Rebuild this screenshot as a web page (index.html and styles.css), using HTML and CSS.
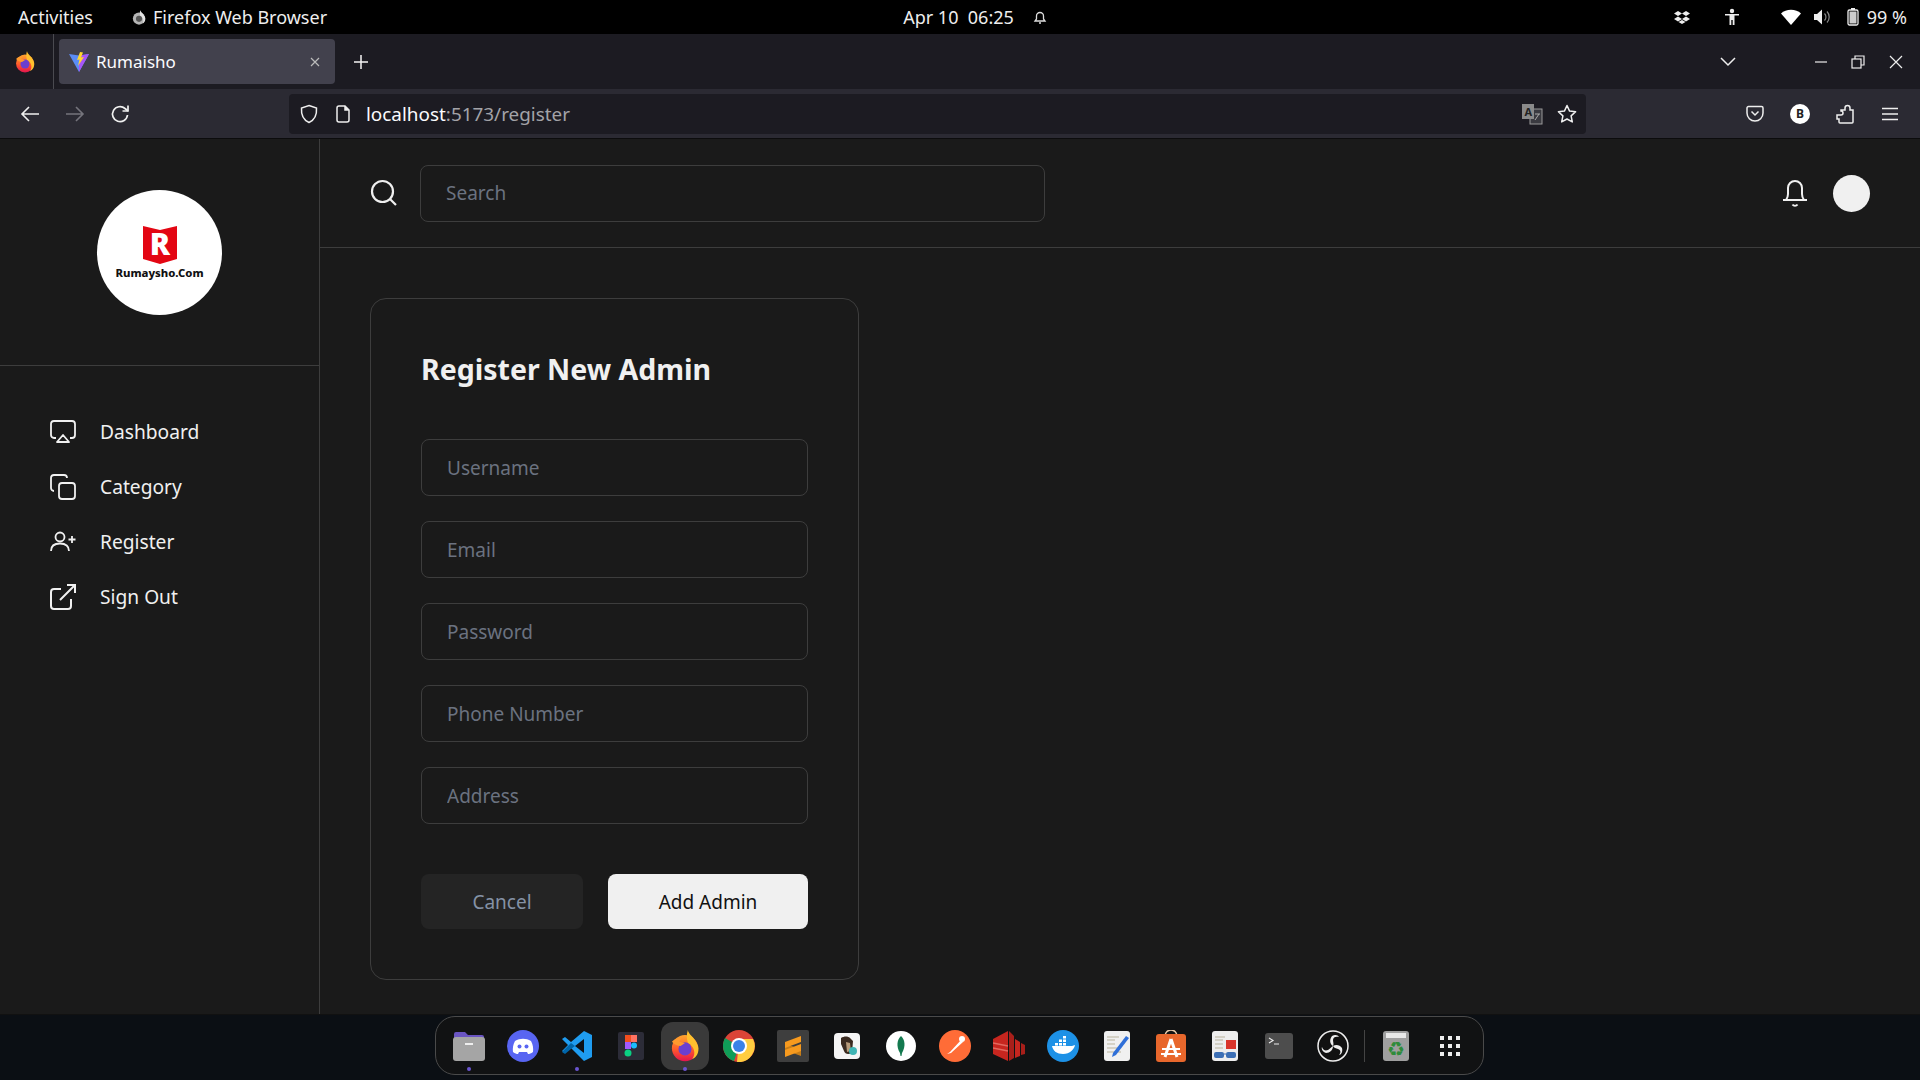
FILE: index.html
```html
<!DOCTYPE html>
<html lang="en">
  <head>
    <meta charset="UTF-8" />
    <meta name="viewport" content="width=device-width, initial-scale=1.0" />
    <title>Rumaisho</title>
    <link rel="stylesheet" href="styles.css">
  </head>
  <body>
    <!-- GNOME top bar -->
    <div class="top-bar">
      <div class="top-left">
        <span>Activities</span>
        <span class="app-name">
          <svg width="14" height="15" viewBox="0 0 20 22"><circle cx="10" cy="12.500" r="9" fill="#b5b5b5"/><path d="M12 0c0 3 5 5 7 11 1 4-1 8-4 9 3-4 1-9-3-11-1-3-1-6 0-9z" fill="#e4e4e4"/><circle cx="10" cy="13" r="4.500" fill="#555"/></svg>
          Firefox Web Browser
        </span>
      </div>
      <div class="top-clock">
        <span>Apr 10&nbsp; 06:25</span>
        <svg width="16" height="16" viewBox="0 0 16 16" fill="none" stroke="#ddd" stroke-width="1.300"><path d="M3 12h10l-1.500-2V7a3.500 3.500 0 0 0-7 0v3z"/><path d="M7 14h2"/></svg>
      </div>
      <div class="top-right">
        <svg class="tray-dropbox" width="16" height="14" viewBox="0 0 16 14" fill="#eee"><path d="M4 1l4 2.500L4 6 0 3.500zM12 1l4 2.500L12 6 8 3.500zM4 6.500l4 2.500-4 2.500-4-2.500zM12 6.500l4 2.500-4 2.500-4-2.500zM4.500 12l3.500-2 3.500 2L8 14z"/></svg>
        <svg class="tray-access" width="18" height="18" viewBox="0 0 18 18" fill="#eee"><circle cx="9" cy="3" r="2.200"/><path d="M2 6h14v1.600h-4.500V17H9.700v-5H8.300v5H6.500V7.600H2z"/></svg>
        <svg class="tray-wifi" width="20" height="16" viewBox="0 0 20 16" fill="#fff"><path d="M0 4.500C5-.5 15-.5 20 4.500L10 16z"/></svg>
        <svg class="tray-volume" width="18" height="16" viewBox="0 0 18 16"><path d="M0 5h3l5-4.500v15L3 11H0z" fill="#eee"/><path d="M10.500 4.500a5 5 0 0 1 0 7M13 2.500a8 8 0 0 1 0 11" fill="none" stroke="#888" stroke-width="1.200"/></svg>
        <svg class="tray-battery" width="12" height="18" viewBox="0 0 12 18"><rect x="1" y="2" width="10" height="15" rx="1.500" fill="none" stroke="#eee" stroke-width="1.300"/><rect x="4" y="0" width="4" height="2" fill="#eee"/><rect x="2.500" y="3.500" width="7" height="12" fill="#ccc"/></svg>
        <span class="tray-percent">99 %</span>
      </div>
    </div>

    <!-- Firefox tab strip -->
    <div class="tab-strip">
      <div class="ff-button">
        <svg width="20" height="22" viewBox="0 0 20 22"><defs><linearGradient id="ffTop" x1="0" y1="0" x2="0" y2="1"><stop offset="0" stop-color="#ffa52e"/><stop offset="0.55" stop-color="#ff5a2b"/><stop offset="1" stop-color="#e3134f"/></linearGradient></defs><circle cx="10" cy="12.500" r="9" fill="url(#ffTop)"/><path d="M12 0c0 3 5 5 7 11 1 4-1 8-4 9 3-4 1-9-3-11-1-3-1-6 0-9z" fill="#ffc02e"/><circle cx="10" cy="13" r="4.500" fill="#6b3fd0"/><path d="M1 8c2-2 4-3 7-3L6 8l4 1-3 2c-2 0-4-1-6-3z" fill="#ff9a2e"/></svg>
      </div>
      <div class="tab">
        <svg width="20" height="20" viewBox="0 0 20 20"><path d="M0 2l10 1.500L20 2 10 20z" fill="#5b8cf5"/><path d="M10 3.500L20 2 10 20z" fill="#a855f7"/><path d="M11 0l3 .5-2 5 3-.5-6 9 1.500-6.500-2.500.5z" fill="#ffd62e"/></svg>
        <span class="tab-title">Rumaisho</span>
        <svg class="tab-close" width="12" height="12" viewBox="0 0 12 12" stroke="#bbb" stroke-width="1.200"><path d="M2 2l8 8M10 2l-8 8"/></svg>
      </div>
      <svg class="new-tab" width="16" height="16" viewBox="0 0 16 16" stroke="#f5f5f5" stroke-width="1.500"><path d="M8 1v14M1 8h14"/></svg>
      <svg class="tab-list" width="16" height="10" viewBox="0 0 16 10" fill="none" stroke="#eee" stroke-width="1.500"><path d="M1 1l7 7 7-7"/></svg>
      <svg class="win-min" width="14" height="14" viewBox="0 0 14 14" stroke="#eee" stroke-width="1.200"><path d="M1 7h12"/></svg>
      <svg class="win-max" width="14" height="14" viewBox="0 0 14 14" fill="none" stroke="#eee" stroke-width="1.200"><rect x="1" y="4" width="9" height="9"/><path d="M4 4V1h9v9h-3"/></svg>
      <svg class="win-close" width="14" height="14" viewBox="0 0 14 14" stroke="#eee" stroke-width="1.200"><path d="M1 1l12 12M13 1L1 13"/></svg>
    </div>

    <!-- Firefox toolbar -->
    <div class="toolbar">
      <svg class="tb-back" width="20" height="18" viewBox="0 0 20 18" fill="none" stroke="#f0f0f0" stroke-width="1.600"><path d="M19 9H2M9 2L2 9l7 7"/></svg>
      <svg class="tb-forward" width="20" height="18" viewBox="0 0 20 18" fill="none" stroke="#75747c" stroke-width="1.600"><path d="M1 9h17M11 2l7 7-7 7"/></svg>
      <svg class="tb-reload" width="20" height="20" viewBox="0 0 20 20" fill="none" stroke="#f0f0f0" stroke-width="1.700"><path d="M17.500 11a7.500 7.500 0 1 1-2.500-6.500L18 7"/><path d="M18 1.500V7h-5.500"/></svg>
      <div class="url-bar">
        <svg width="20" height="20" viewBox="0 0 20 20" fill="none" stroke="#eee" stroke-width="1.500"><path d="M10 1.500l7.500 2.500c.5 7-2 12-7.500 14.500C4.500 16 2 11 2.500 4z"/></svg>
        <svg class="url-page" width="16" height="18" viewBox="0 0 16 18" fill="none" stroke="#eee" stroke-width="1.500"><path d="M2 3a2 2 0 0 1 2-2h6l4 4v10a2 2 0 0 1-2 2H4a2 2 0 0 1-2-2z"/><path d="M10 1v4h4" fill="#eee"/></svg>
        <span class="url-text">localhost<span class="url-dim">:5173/register</span></span>
        <svg class="url-translate" width="22" height="22" viewBox="0 0 22 22"><rect x="9" y="6" width="12" height="15" fill="#3a3a40" stroke="#999"/><rect x="1" y="1" width="12" height="15" fill="#8a8a8a"/><text x="3.500" y="12.500" class="translate-letter">A</text><path d="M14 11h5M18 11l-4 6" stroke="#aaa" fill="none"/></svg>
        <svg class="url-star" width="20" height="20" viewBox="0 0 20 20" fill="none" stroke="#f0f0f0" stroke-width="1.500" stroke-linejoin="round"><path d="M10 1.500l2.600 5.600 6 .7-4.500 4.100 1.200 6L10 15l-5.300 2.900 1.200-6L1.400 7.800l6-.7z"/></svg>
      </div>
      <svg class="tb-pocket" width="18" height="18" viewBox="0 0 18 18" fill="none" stroke="#eee" stroke-width="1.500"><path d="M1 3a1.500 1.500 0 0 1 1.500-1.500h13A1.500 1.500 0 0 1 17 3v5a8 8 0 0 1-16 0z"/><path d="M5.500 6.500L9 10l3.500-3.500"/></svg>
      <div class="tb-avatar">B</div>
      <svg class="tb-ext" width="18" height="20" viewBox="0 0 18 20" fill="none" stroke="#eee" stroke-width="1.500"><path d="M1 11h4a2 2 0 0 0 0-4V6h4V4a2.500 2.500 0 0 1 5 0v2h3v12a1 1 0 0 1-1 1H4a1 1 0 0 1-1-1v-3H1z"/></svg>
      <svg class="tb-menu" width="16" height="14" viewBox="0 0 16 14" stroke="#eee" stroke-width="1.500"><path d="M0 1.500h16M0 7h16M0 12.500h16"/></svg>
    </div>

    <!-- The page itself -->
    <div class="app">
      <aside class="sidebar">
        <div class="logo-box">
          <div class="logo">
            <svg class="logo-mark" width="36" height="38" viewBox="0 0 36 38"><path d="M1 0l17 4 17-4v33l-17 5-17-5z" fill="#e30613"/><text x="18" y="29" class="logo-r">R</text></svg>
            <span class="logo-name">Rumaysho.Com</span>
          </div>
        </div>
        <nav class="side-nav">
          <a class="nav-item">
            <svg width="26" height="24" viewBox="0 0 26 24" fill="none" stroke="#f0f0f0" stroke-width="1.800" stroke-linejoin="round"><path d="M6 18H4a3 3 0 0 1-3-3V4a3 3 0 0 1 3-3h18a3 3 0 0 1 3 3v11a3 3 0 0 1-3 3h-2"/><path d="M13 15l6 7H7z"/></svg>
            Dashboard
          </a>
          <a class="nav-item">
            <svg width="26" height="26" viewBox="0 0 26 26" fill="none" stroke="#f0f0f0" stroke-width="1.800"><rect x="9" y="9" width="16" height="16" rx="3"/><path d="M4 17a3 3 0 0 1-3-3V4a3 3 0 0 1 3-3h10a3 3 0 0 1 3 3"/></svg>
            Category
          </a>
          <a class="nav-item">
            <svg width="26" height="22" viewBox="0 0 26 22" fill="none" stroke="#f0f0f0" stroke-width="1.800"><circle cx="10" cy="6" r="4.500"/><path d="M1 20c0-5 3-7.500 9-7.500s9 2.500 9 7.500M22 5v7M18.500 8.500h7"/></svg>
            Register
          </a>
          <a class="nav-item">
            <svg width="26" height="26" viewBox="0 0 26 26" fill="none" stroke="#f0f0f0" stroke-width="2"><path d="M21 15v7a3 3 0 0 1-3 3H4a3 3 0 0 1-3-3V8a3 3 0 0 1 3-3h7"/><path d="M17 1h8v8M25 1L10 16"/></svg>
            Sign Out
          </a>
        </nav>
      </aside>

      <div class="content">
        <header class="page-header">
          <svg width="28" height="28" viewBox="0 0 28 28" fill="none" stroke="#f0f0f0" stroke-width="2.200"><circle cx="12.500" cy="12.500" r="10.500"/><path d="M20 20l6 6"/></svg>
          <input class="search" type="text" placeholder="Search" />
          <svg class="bell" width="26" height="28" viewBox="0 0 26 28" fill="none" stroke="#f0f0f0" stroke-width="2"><path d="M1 21h24M4 21c1.500-2 2-3 2-6V9a7 7 0 0 1 14 0v6c0 3 .5 4 2 6"/><path d="M10.500 25.500a3 3 0 0 0 5 0"/></svg>
          <div class="avatar"></div>
        </header>

        <main class="page-main">
          <form class="card">
            <h1>Register New Admin</h1>
            <input class="field" type="text" placeholder="Username" />
            <input class="field" type="text" placeholder="Email" />
            <input class="field" type="password" placeholder="Password" />
            <input class="field" type="text" placeholder="Phone Number" />
            <input class="field" type="text" placeholder="Address" />
            <div class="form-actions">
              <button type="button" class="btn-cancel">Cancel</button>
              <button type="submit" class="btn-add">Add Admin</button>
            </div>
          </form>
        </main>
      </div>
    </div>

    <!-- Ubuntu dock -->
    <div class="dock-strip">
      <div class="dock">
        <div class="dock-item running">
          <svg width="32" height="30" viewBox="0 0 32 30"><path d="M1 3a2 2 0 0 1 2-2h9l3 3h14a2 2 0 0 1 2 2v6H1z" fill="#6a55c2"/><rect x="0" y="6" width="32" height="24" rx="3" fill="#a5a5a5"/><rect x="12" y="12" width="8" height="2" fill="#eee"/></svg>
        </div>
        <div class="dock-item">
          <svg width="32" height="32" viewBox="0 0 32 32"><circle cx="16" cy="16" r="16" fill="#5865f2"/><path d="M8 11c5-3 11-3 16 0 2 4 2.500 7 2 11-2 1.500-3.500 2-5 2l-1-2h-8l-1 2c-1.500 0-3-.5-5-2-.5-4 0-7 2-11z" fill="#fff"/><circle cx="12.500" cy="16.500" r="2" fill="#5865f2"/><circle cx="19.500" cy="16.500" r="2" fill="#5865f2"/></svg>
        </div>
        <div class="dock-item running">
          <svg width="30" height="30" viewBox="0 0 30 30"><path d="M22 0l8 4v22l-8 4-13-13-6 5-3-2 6-6-6-6 3-2 6 5z" fill="#1f9cf0"/><path d="M22 8v14l-9-7z" fill="#0d1117"/><path d="M0 21l3 2 6-5 4-3-4-3z" fill="#0065a9"/></svg>
        </div>
        <div class="dock-item">
          <svg width="26" height="28" viewBox="0 0 26 28"><rect width="26" height="28" rx="2" fill="#2c2c38"/><rect x="7" y="3" width="6" height="7" fill="#f24e1e"/><rect x="13" y="3" width="6" height="7" fill="#ff7262"/><rect x="7" y="10" width="6" height="7" fill="#a259ff"/><circle cx="16" cy="13.500" r="3" fill="#1abcfe"/><circle cx="10" cy="21" r="3.500" fill="#0acf83"/></svg>
        </div>
        <div class="dock-item active running">
          <svg width="30" height="32" viewBox="0 0 20 22"><defs><linearGradient id="ffDock" x1="0" y1="0" x2="0" y2="1"><stop offset="0" stop-color="#ffa52e"/><stop offset="0.55" stop-color="#ff5a2b"/><stop offset="1" stop-color="#e3134f"/></linearGradient></defs><circle cx="10" cy="12.500" r="9" fill="url(#ffDock)"/><path d="M12 0c0 3 5 5 7 11 1 4-1 8-4 9 3-4 1-9-3-11-1-3-1-6 0-9z" fill="#ffc02e"/><circle cx="10" cy="13" r="4.500" fill="#6b3fd0"/><path d="M1 8c2-2 4-3 7-3L6 8l4 1-3 2c-2 0-4-1-6-3z" fill="#ff9a2e"/></svg>
        </div>
        <div class="dock-item">
          <svg width="32" height="32" viewBox="0 0 32 32"><circle cx="16" cy="16" r="16" fill="#db4437"/><path d="M16 16L2 8a16 16 0 0 0 9 23z" fill="#0f9d58"/><path d="M16 9h14a16 16 0 0 1-16 23z" fill="#ffcd40"/><circle cx="16" cy="16" r="8" fill="#fff"/><circle cx="16" cy="16" r="6" fill="#3b82e8"/></svg>
        </div>
        <div class="dock-item">
          <svg width="32" height="32" viewBox="0 0 32 32"><rect width="32" height="32" rx="2" fill="#3e3e3e"/><path d="M8 14L24 19v7L8 20z" fill="#c77d18"/><path d="M8 12L24 6v6L8 18z" fill="#f79a1e"/><path d="M8 20l16-6v7L8 27z" fill="#f79a1e"/></svg>
        </div>
        <div class="dock-item">
          <svg width="26" height="26" viewBox="0 0 26 26"><rect width="26" height="26" rx="4" fill="#f5f5f5"/><path d="M7 5c3-2 7-2 9 0l3 3-1 12c-4 2-7 1-8-2L7 11z" fill="#3a2a20"/><path d="M12 9l4 1 1 8-4 1z" fill="#b89b7a"/><circle cx="19" cy="18" r="4" fill="#3fb5b5"/></svg>
        </div>
        <div class="dock-item">
          <svg width="30" height="30" viewBox="0 0 30 30"><circle cx="15" cy="15" r="15" fill="#fff"/><path d="M15 5c4 4 5 10 1 17l-.5 3h-1l-.5-3c-4-7-3-13 1-17z" fill="#13794f"/></svg>
        </div>
        <div class="dock-item">
          <svg width="32" height="32" viewBox="0 0 32 32"><circle cx="16" cy="16" r="16" fill="#ff6c37"/><path d="M8 24l3-2 11-12 2 2-12 11z" fill="#fff"/><circle cx="23" cy="9" r="3" fill="#fff"/></svg>
        </div>
        <div class="dock-item">
          <svg width="32" height="32" viewBox="0 0 32 32"><path d="M0 9l15-8v30L0 24z" fill="#c7261f"/><path d="M16 1l5 5v22l-5 3z" fill="#a81f1a"/><path d="M22 9l5 3v14l-5 2z" fill="#c7261f"/><path d="M28 13l4 2v9l-4 1z" fill="#a81f1a"/><path d="M0 13l15 3M0 18l15 3" stroke="#e2695f" stroke-width="1.500"/></svg>
        </div>
        <div class="dock-item">
          <svg width="32" height="32" viewBox="0 0 32 32"><circle cx="16" cy="16" r="16" fill="#1d91e6"/><path d="M5 16h20c1 0 2-1 3-1-.5 4-5 9-12 9-6 0-10-3-11-8z" fill="#fff"/><path d="M8 13h3v2.500H8zM12 13h3v2.500h-3zM16 13h3v2.500h-3zM12 9.500h3V12h-3zM16 9.500h3V12h-3zM16 6h3v2.500h-3z" fill="#fff"/></svg>
        </div>
        <div class="dock-item">
          <svg width="26" height="30" viewBox="0 0 26 30"><rect width="26" height="30" rx="3" fill="#f0f0f0"/><path d="M3 6h12M3 9h8M3 13h8M3 17h10M3 21h14" stroke="#b9b39c"/><path d="M22 5l3 2-13 17-4 2 1-4z" fill="#2f6fd8"/></svg>
        </div>
        <div class="dock-item">
          <svg width="30" height="32" viewBox="0 0 30 32"><path d="M9 6a6 6 0 0 1 12 0" fill="none" stroke="#e8c9a8" stroke-width="1.500"/><rect y="4" width="30" height="28" rx="3" fill="#e8672c"/><path d="M15 9L9 27M15 9l6 18" stroke="#fff" stroke-width="3" fill="none"/><path d="M6 19h18M5 24h20" stroke="#fff" stroke-width="2"/></svg>
        </div>
        <div class="dock-item">
          <svg width="26" height="30" viewBox="0 0 26 30"><rect width="26" height="30" rx="3" fill="#eee"/><path d="M3 6h10M3 9h8M3 13h8M3 17h8" stroke="#b9b39c"/><rect x="14" y="9" width="10" height="9" fill="#d9352b"/><rect x="2" y="21" width="10" height="6" rx="2" fill="#3c6fb5"/><rect x="14" y="21" width="10" height="6" rx="2" fill="#3c6fb5"/><path d="M12 23h2" stroke="#3c6fb5"/></svg>
        </div>
        <div class="dock-item">
          <svg width="28" height="26" viewBox="0 0 28 26"><rect width="28" height="26" rx="3" fill="#4d4d4d"/><path d="M4 5l4 2.500-4 2.500M9 11h5" fill="none" stroke="#eee" stroke-width="1.200"/></svg>
        </div>
        <div class="dock-item">
          <svg width="32" height="32" viewBox="0 0 32 32"><circle cx="16" cy="16" r="15" fill="#111" stroke="#eee" stroke-width="1.500"/><path d="M16 16c-3-2-4-6-1-10 3-2 6-1 7 1-3-1-6 0-6 3 0 2 1 4 0 6zM16 16c3-2 7-1 9 2 1 4-1 7-3 7 2-2 2-5-1-6-2-1-4-1-5-3zM16 16c0 4-3 7-7 7-3-1-5-4-4-6 1 3 3 4 6 3 2-1 3-3 5-4z" fill="#eee"/></svg>
        </div>
        <div class="dock-sep"></div>
        <div class="dock-item">
          <svg width="26" height="30" viewBox="0 0 26 30"><rect width="26" height="30" rx="3" fill="#9f9f9f"/><rect x="3" y="2" width="20" height="5" fill="#e8e8e8"/><text x="13" y="25" class="trash-sign">♻</text></svg>
        </div>
        <div class="dock-item apps">
          <svg width="20" height="20" viewBox="0 0 20 20" fill="#eee"><rect width="4" height="4"/><rect x="8" width="4" height="4"/><rect x="16" width="4" height="4"/><rect y="8" width="4" height="4"/><rect x="8" y="8" width="4" height="4"/><rect x="16" y="8" width="4" height="4"/><rect y="16" width="4" height="4"/><rect x="8" y="16" width="4" height="4"/><rect x="16" y="16" width="4" height="4"/></svg>
        </div>
      </div>
    </div>
  </body>
</html>
```

FILE: styles.css
```css
* {
  box-sizing: border-box;
  margin: 0;
  padding: 0;
  font-family: "Noto Sans", "Open Sans", sans-serif;
}

body {
  width: 1920px;
  height: 1080px;
  overflow: hidden;
  display: flex;
  flex-direction: column;
  background-color: #1a1a1a;
}

svg {
  flex-shrink: 0;
  display: block;
}

/* Top bar */
.top-bar {
  height: 34px;
  background-color: #000;
  color: #eee;
  font-size: 18px;
  display: grid;
  grid-template-columns: 1fr auto 1fr;
  align-items: center;
  padding: 0 13px 0 18px;
}

.top-left {
  display: flex;
  align-items: center;
  gap: 39px;
}

.app-name {
  display: flex;
  align-items: center;
  gap: 7px;
}

.top-clock {
  display: flex;
  align-items: center;
  gap: 18px;
  padding-left: 26px;
}

.top-right {
  display: flex;
  align-items: center;
  justify-content: flex-end;
}

.tray-access {
  margin-left: 33px;
}

.tray-wifi {
  margin-left: 40px;
}

.tray-volume {
  margin-left: 13px;
}

.tray-battery {
  margin-left: 15px;
}

.tray-percent {
  margin-left: 8px;
}

/* Tab strip */
.tab-strip {
  height: 55px;
  background-color: #1c1b22;
  display: flex;
  align-items: center;
  color: #fbfbfe;
}

.ff-button {
  width: 54px;
  height: 55px;
  border-right: 1px solid #4a4a50;
  display: flex;
  align-items: center;
  padding-left: 15px;
}

.tab {
  width: 276px;
  height: 45px;
  margin-left: 5px;
  background-color: #42414d;
  border-radius: 4px;
  display: flex;
  align-items: center;
  padding: 0 14px 0 10px;
  font-size: 17px;
}

.tab-title {
  margin-left: 7px;
  flex: 1;
}

.new-tab {
  margin-left: 18px;
}

.tab-list {
  margin-left: 1351px;
}

.win-min {
  margin-left: 78px;
}

.win-max {
  margin-left: 23px;
}

.win-close {
  margin-left: 24px;
}

/* Toolbar */
.toolbar {
  height: 50px;
  background-color: #2b2a33;
  display: flex;
  align-items: center;
  border-bottom: 1px solid #0c0c0d;
}

.tb-back {
  margin-left: 20px;
}

.tb-forward {
  margin-left: 25px;
}

.tb-reload {
  margin-left: 25px;
}

.url-bar {
  width: 1297px;
  height: 40px;
  margin-left: 159px;
  background-color: #1c1b22;
  border-radius: 4px;
  display: flex;
  align-items: center;
  padding: 0 9px 0 10px;
  color: #fbfbfe;
  font-size: 18.900px;
}

.url-page {
  margin-left: 16px;
}

.url-text {
  margin-left: 15px;
  flex: 1;
}

.url-dim {
  color: #a3a3a8;
}

.translate-letter {
  font-size: 11px;
  font-weight: 700;
  fill: #222;
}

.url-star {
  margin-left: 14px;
}

.tb-pocket {
  margin-left: 160px;
}

.tb-avatar {
  width: 20px;
  height: 20px;
  margin-left: 26px;
  border-radius: 50%;
  background-color: #fff;
  color: #222;
  font-size: 12px;
  font-weight: 700;
  text-align: center;
  line-height: 20px;
}

.tb-ext {
  margin-left: 26px;
}

.tb-menu {
  margin-left: 28px;
}

/* Page layout */
.app {
  flex: 1;
  display: flex;
  min-height: 0;
  color: #f0f0f0;
}

.sidebar {
  width: 320px;
  border-right: 1px solid #3d3d3d;
}

.logo-box {
  height: 227px;
  padding-top: 51px;
  border-bottom: 1px solid #3d3d3d;
  display: flex;
  justify-content: center;
}

.logo {
  width: 125px;
  height: 125px;
  border-radius: 50%;
  background-color: #fff;
  display: flex;
  flex-direction: column;
  align-items: center;
  padding-top: 36px;
}

.logo-mark {
  overflow: visible;
}

.logo-r {
  font-size: 30px;
  font-weight: 900;
  fill: #fff;
  text-anchor: middle;
}

.logo-name {
  margin-top: 1px;
  font-size: 11.300px;
  font-weight: 800;
  color: #111;
}

.side-nav {
  padding: 38px 0 0 50px;
}

.nav-item {
  height: 55px;
  display: grid;
  grid-template-columns: 50px 1fr;
  align-items: center;
  font-size: 19.200px;
}

.content {
  flex: 1;
}

.page-header {
  height: 109px;
  border-bottom: 1px solid #3d3d3d;
  display: flex;
  align-items: center;
  padding: 0 50px;
}

.search {
  width: 625px;
  height: 57px;
  margin-left: 22px;
  padding: 0 25px;
  background-color: transparent;
  border: 1px solid #3d3d3d;
  border-radius: 8px;
  font-size: 19px;
  color: #f0f0f0;
}

.search::placeholder,
.field::placeholder {
  color: #6b7280;
}

.bell {
  margin-left: auto;
}

.avatar {
  width: 37px;
  height: 37px;
  margin-left: 25px;
  border-radius: 50%;
  background-color: #f0f0f0;
}

.page-main {
  padding: 50px;
}

.card {
  width: 489px;
  height: 682px;
  padding: 50px;
  border: 1px solid #3d3d3d;
  border-radius: 16px;
  display: flex;
  flex-direction: column;
  gap: 25px;
}

.card h1 {
  font-size: 28.500px;
  line-height: 40px;
  font-weight: 700;
  margin-bottom: 25px;
  white-space: nowrap;
}

.field {
  width: 100%;
  height: 57px;
  flex-shrink: 0;
  padding: 0 25px;
  background-color: transparent;
  border: 1px solid #3d3d3d;
  border-radius: 8px;
  font-size: 19px;
  color: #f0f0f0;
}

.form-actions {
  display: flex;
  gap: 25px;
  margin-top: 25px;
}

.form-actions button {
  height: 55px;
  border: none;
  border-radius: 8px;
  font-size: 19px;
}

.btn-cancel {
  width: 162px;
  background-color: #242424;
  color: #8492a6;
}

.btn-add {
  width: 200px;
  background-color: #f0f0f0;
  color: #111;
}

/* Dock */
.dock-strip {
  height: 66px;
  background-color: #0b0f14;
  border-top: 1px solid #111;
  padding: 1px 0 0 435px;
}

.dock {
  width: 1049px;
  height: 59px;
  background-color: #111213;
  border: 1px solid #4a4a4a;
  border-radius: 20px;
  display: flex;
  align-items: center;
  padding-left: 6px;
}

.dock-item {
  position: relative;
  width: 54px;
  height: 48px;
  display: flex;
  align-items: center;
  justify-content: center;
}

.dock-item.active {
  background-color: #3a3a3a;
  border-radius: 12px;
  width: 48px;
  margin: 0 3px;
}

.dock-item.running::after {
  content: "";
  position: absolute;
  left: 50%;
  bottom: -1px;
  width: 4px;
  height: 4px;
  margin-left: -2px;
  border-radius: 50%;
  background-color: #6a55d0;
}

.trash-sign {
  font-family: "DejaVu Sans", sans-serif;
  font-size: 20px;
  fill: #2e8b3a;
  text-anchor: middle;
}

.dock-sep {
  width: 1px;
  height: 32px;
  margin: 0 4px;
  background-color: #444;
}
```
